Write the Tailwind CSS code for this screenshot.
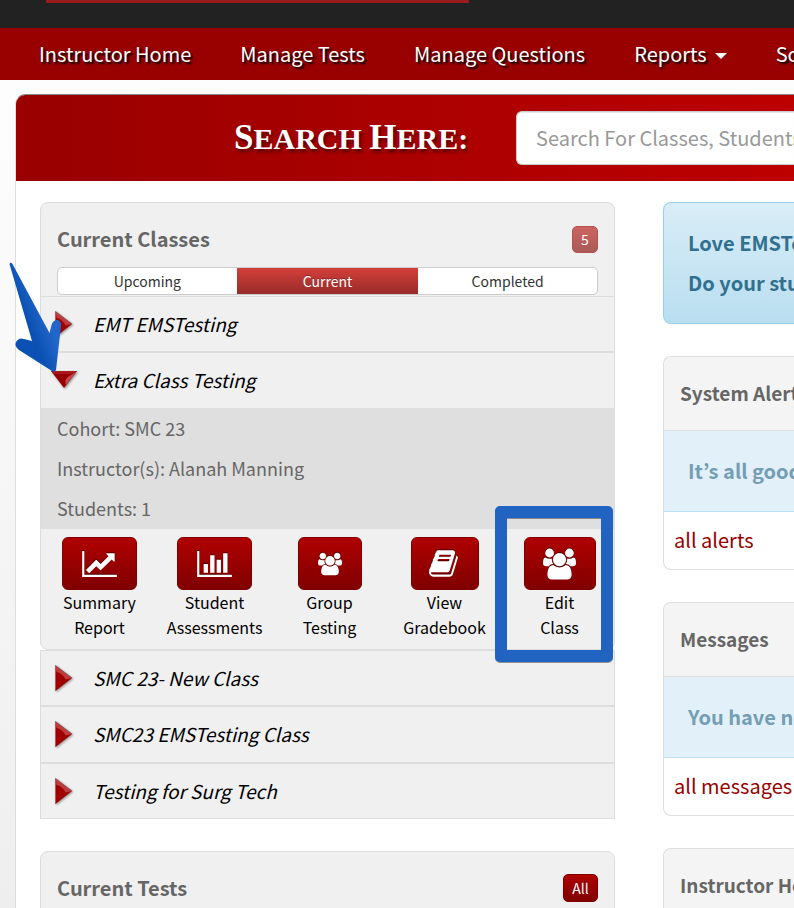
<!DOCTYPE html>
<html lang="en">
<head>
<meta charset="utf-8">
<meta name="viewport" content="width=device-width, initial-scale=1">
<title>Instructor Home</title>
<script src="https://cdn.jsdelivr.net/npm/@tailwindcss/browser@4"></script>
</head>
<body class="min-h-screen overflow-hidden bg-linear-to-b from-white to-[#eeeeee] font-['Noto_Sans_CJK_KR','Open_Sans',sans-serif] text-black">
<svg class="absolute size-0" aria-hidden="true">
  <defs>
    <symbol id="right" viewBox="0 0 20 28"><path d="M2 1.500 18.500 14 2 27z" fill="#a00000"/><path d="M2 1.500 18.500 14 12 15.500Q9 9 3 8z" fill="#bf3a3e"/><path d="M2 27V1.500L18.500 14" fill="none" stroke="#8d6060" stroke-width=".8"/></symbol>
    <symbol id="users" viewBox="0 0 1920 1792"><path d="M593 896q-162 5-265 128h-134q-82 0-138-40.500t-56-118.500q0-353 124-353 6 0 43.500 21t97.500 42.500 119 21.500q67 0 133-23-5 37-5 66 0 139 81 256zm1071 637q0 120-73 189.500t-194 69.500h-874q-121 0-194-69.500t-73-189.500q0-53 3.500-103.500t14-109 26.500-108.500 43-97.500 62-81 85.500-53.500 111.500-20q10 0 43 21.500t73 48 107 48 135 21.500 135-21.500 107-48 73-48 43-21.500q61 0 111.500 20t85.500 53.500 62 81 43 97.500 26.500 108.500 14 109 3.500 103.500zm-1024-1277q0 106-75 181t-181 75-181-75-75-181 75-181 181-75 181 75 75 181zm704 384q0 159-112.500 271.500t-271.500 112.500-271.500-112.500-112.500-271.500 112.500-271.500 271.500-112.500 271.500 112.500 112.500 271.500zm576 225q0 78-56 118.500t-138 40.500h-134q-103-123-265-128 81-117 81-256 0-29-5-66 66 23 133 23 59 0 119-21.500t97.500-42.500 43.500-21q124 0 124 353zm-128-609q0 106-75 181t-181 75-181-75-75-181 75-181 181-75 181 75 75 181z"/></symbol>
  </defs>
</svg>

<div class="h-7 bg-[#222222] pl-[46px]"><div class="h-[3px] w-[423px] bg-[#981b1e]"></div></div>

<nav class="flex h-[52px] items-center gap-[49px] overflow-hidden bg-[#990000] pl-[39px] text-xl leading-8 whitespace-nowrap text-white text-shadow-[2px_2px_2px_#000000]">
  <a href="#">Instructor Home</a>
  <a href="#">Manage Tests</a>
  <a href="#">Manage Questions</a>
  <a href="#" class="flex items-center gap-2">Reports <span class="mt-1 border-x-6 border-t-6 border-x-transparent border-t-white"></span></a>
  <a href="#">Schedule</a>
</nav>

<main class="mt-[14px] ml-[15px] overflow-hidden rounded-tl-[10px] border-t border-l border-t-[#888888] border-l-[#dddddd] bg-white">
  <header class="flex h-[86px] items-center bg-linear-to-r from-[#990000] to-[#bd0000] pl-[218px]">
    <label for="search" class="w-[282px] shrink-0 font-['Liberation_Serif',serif] text-[30px] leading-10 font-bold text-white uppercase text-shadow-[2px_3px_3px_rgb(0_0_0/0.5)]"><span class="text-[35px]">S</span>earch <span class="text-[35px]">H</span>ere:</label>
    <input id="search" type="text" placeholder="Search For Classes, Students" class="h-[54px] min-w-0 flex-1 rounded-l-md border border-r-0 border-[#cccccc] bg-white pb-0.5 pl-[19px] text-xl text-[#555555] shadow-[inset_0_1px_1px_rgb(0_0_0/0.1)] placeholder:text-[#999999]">
  </header>

  <div class="flex items-start gap-12 pt-[21px] pl-6">
    <div class="w-[575px] shrink-0">
      <section class="rounded-t-lg border border-b-0 border-[#dddddd] bg-[#f0f0f0] px-4 pt-5 pb-px">
        <div class="flex h-8 items-center justify-between">
          <h2 class="text-xl leading-8 font-bold text-[#666666]">Current Classes</h2>
          <span class="flex h-[27px] w-[26px] items-center justify-center rounded-[5px] border border-[#b5504f] bg-linear-to-b from-[#cc6460] to-[#a95b59] text-sm text-white">5</span>
        </div>
        <div class="mt-3 grid grid-cols-[179fr_182fr_179fr] overflow-hidden rounded-[5px] border border-[#cccccc] bg-white text-sm leading-[26px] text-[#333333]">
          <button type="button">Upcoming</button>
          <button type="button" class="bg-linear-to-b from-[#d43f3a] to-[#972b29] text-white text-shadow-[0_-1px_0_rgb(0_0_0/0.3)]">Current</button>
          <button type="button">Completed</button>
        </div>
      </section>

      <div class="text-[19px] leading-8">
        <button type="button" class="flex h-14 w-full items-center gap-[19px] border border-[#dddddd] bg-[#f0f0f0] pb-px pl-3 text-left italic"><svg class="h-7 w-[21px] drop-shadow-[1px_1px_1px_rgb(0_0_0/0.4)]"><use href="#right"/></svg>EMT EMSTesting</button>
        <section class="rounded-b-lg border border-[#dddddd] bg-[#f0f0f0]">
          <button type="button" class="flex h-[55px] w-full items-center gap-[14px] pb-0.5 pl-2 text-left italic"><svg class="h-[22px] w-[30px] drop-shadow-[1px_1px_1px_rgb(0_0_0/0.4)]" viewBox="0 0 30 22"><path d="M2 2h26L15 19z" fill="#980000"/><path d="M28 2 17 16q-2-5 2-8z" fill="#c4474b"/><path d="M2 2h26l-6 3H5z" fill="#a8181c"/></svg>Extra Class Testing</button>
          <div class="relative">
            <div class="h-[121px] bg-[#dfdfdf] px-4 text-lg leading-10 text-[#666666]">
              <p>Cohort: SMC 23</p><p>Instructor(s): Alanah Manning</p><p>Students: 1</p>
            </div>
            <div class="-mr-[3px] grid h-[120px] grid-cols-5 pt-2 pl-px text-center text-base leading-[25px]">
              <a href="#" class="flex flex-col items-center"><span class="flex h-[53px] w-[75px] items-center justify-center rounded-md border border-[#800000] bg-linear-to-b from-[#b00000] to-[#800000]"><svg class="h-[26px] w-[35px] fill-white drop-shadow-[0_-1px_0_#500000]" viewBox="0 0 2048 1536"><path d="M2048 1408v128H0V0h128v1408h1920zm-128-1248v435q0 21-19.500 29.500T1865 617l-121-121-633 633q-10 10-23 10t-23-10L832 896l-416 416-192-192 585-585q10-10 23-10t23 10l233 233 464-464-121-121q-16-16-7.500-35.500T1453 128h435q14 0 23 9t9 23z"/></svg></span>Summary<br>Report</a>
              <a href="#" class="flex flex-col items-center"><span class="flex h-[53px] w-[75px] items-center justify-center rounded-md border border-[#800000] bg-linear-to-b from-[#b00000] to-[#800000]"><svg class="h-[26px] w-[35px] fill-white drop-shadow-[0_-1px_0_#500000]" viewBox="0 0 2048 1536"><path d="M640 768v512H384V768h256zm384-512v1024H768V256h256zm1024 1152v128H0V0h128v1408h1920zm-640-896v768h-256V512h256zm384-384v1152h-256V128h256z"/></svg></span>Student<br>Assessments</a>
              <a href="#" class="flex flex-col items-center"><span class="flex h-[53px] w-16 items-center justify-center rounded-md border border-[#800000] bg-linear-to-b from-[#b00000] to-[#800000]"><svg class="h-6 w-6 fill-white drop-shadow-[0_-1px_0_#500000]"><use href="#users"/></svg></span>Group<br>Testing</a>
              <a href="#" class="flex flex-col items-center"><span class="flex h-[53px] w-[68px] items-center justify-center rounded-md border border-[#800000] bg-linear-to-b from-[#b00000] to-[#800000]"><svg class="size-[31px] fill-white drop-shadow-[0_-1px_0_#500000]" viewBox="0 0 1792 1792"><path d="M1639 478q40 57 18 129l-275 906q-19 64-76.500 107.500t-122.500 43.500h-923q-77 0-148.500-53.500t-99.500-131.500q-24-67-2-127 0-4 3-27t4-37q1-8-3-21.500t-3-19.500q2-11 8-21t16.500-23.500 16.500-23.500q23-38 45-91.500t30-91.500q3-10 .5-30t-.5-28q3-11 17-28t17-23q21-36 42-92t25-90q1-9-2.500-32t.5-28q4-13 22-30.500t22-22.500q19-26 42.500-84.500t27.500-96.500q1-8-3-25.500t-2-26.500q2-8 9-18t18-23 17-21q8-12 16.500-30.500t15-35 16-36 19.500-32 26.500-23.500 36-11.500 47.500 5.500l-1 3q38-9 51-9h761q74 0 114 56t18 130l-274 906q-36 119-71.500 153.500t-128.500 34.500h-869q-27 0-38 15-11 16-1 43 24 70 144 70h923q29 0 56-15.500t35-41.500l300-987q7-22 5-57 38 15 59 43zm-1064 2q-4 13 2 22.500t20 9.500h608q13 0 25.500-9.500t16.500-22.500l21-64q4-13-2-22.500t-20-9.500h-608q-13 0-25.500 9.500t-16.500 22.500zm-83 256q-4 13 2 22.500t20 9.500h608q13 0 25.500-9.500t16.500-22.500l21-64q4-13-2-22.500t-20-9.500h-608q-13 0-25.500 9.500t-16.500 22.500z"/></svg></span>View<br>Gradebook</a>
              <a href="#" class="flex flex-col items-center"><span class="flex h-[53px] w-[72px] items-center justify-center rounded-md border border-[#800000] bg-linear-to-b from-[#b00000] to-[#800000]"><svg class="h-8 w-[33px] fill-white drop-shadow-[0_-1px_0_#500000]"><use href="#users"/></svg></span>Edit<br>Class</a>
            </div>
            <div class="pointer-events-none absolute top-[98px] right-px h-[156px] w-[118px] rounded-[5px] border-12 border-[#2063c0] drop-shadow-[0_1px_0_rgb(0_0_0/0.4)]"></div>
          </div>
        </section>
        <button type="button" class="flex h-14 w-full items-center gap-[19px] border border-[#dddddd] bg-[#f0f0f0] pb-px pl-3 text-left italic"><svg class="h-7 w-[21px] drop-shadow-[1px_1px_1px_rgb(0_0_0/0.4)]"><use href="#right"/></svg>SMC 23- New Class</button>
        <button type="button" class="flex h-[57px] w-full items-center gap-[19px] border border-[#dddddd] bg-[#f0f0f0] pb-px pl-3 text-left italic"><svg class="h-7 w-[21px] drop-shadow-[1px_1px_1px_rgb(0_0_0/0.4)]"><use href="#right"/></svg>SMC23 EMSTesting Class</button>
        <button type="button" class="flex h-14 w-full items-center gap-[19px] border border-[#dddddd] bg-[#f0f0f0] pb-px pl-3 text-left italic"><svg class="h-7 w-[21px] drop-shadow-[1px_1px_1px_rgb(0_0_0/0.4)]"><use href="#right"/></svg>Testing for Surg Tech</button>
      </div>

      <section class="mt-8 rounded-t-lg border border-[#dddddd] bg-[#f0f0f0] px-4 py-5">
        <div class="flex h-8 items-center justify-between">
          <h2 class="text-xl leading-8 font-bold text-[#666666]">Current Tests</h2>
          <button type="button" class="flex h-7 w-[35px] items-center justify-center rounded-[5px] border border-[#800000] bg-linear-to-b from-[#b00000] to-[#800000] text-sm text-white">All</button>
        </div>
      </section>
    </div>

    <aside class="flex min-w-0 flex-1 flex-col gap-8 overflow-hidden text-xl whitespace-nowrap">
      <section class="rounded-l-lg border border-r-0 border-[#9acfea] bg-linear-to-b from-[#d9edf7] to-[#b9def0] py-5 pl-6 leading-10 font-bold text-[#31708f]"><p>Love EMSTesting?</p><p>Do your students</p></section>
      <section class="rounded-l-lg border border-r-0 border-[#dddddd] bg-white">
        <h2 class="rounded-tl-lg bg-[#f4f4f4] pb-0.5 pl-4 text-[19px] leading-[71px] font-bold text-[#666666]">System Alerts</h2>
        <p class="border-y border-t-[#dddddd] border-b-[#bcdff1] bg-[#e2f0f9] pl-6 leading-[80px] font-bold text-[#759db3]">It’s all good</p>
        <a href="#" class="block pb-0.5 pl-[10px] leading-[55px] text-[#990000]">all alerts</a>
      </section>
      <section class="rounded-l-lg border border-r-0 border-[#dddddd] bg-white">
        <h2 class="rounded-tl-lg bg-[#f4f4f4] pb-0.5 pl-4 text-[19px] leading-[71px] font-bold text-[#666666]">Messages</h2>
        <p class="border-y border-t-[#dddddd] border-b-[#bcdff1] bg-[#e2f0f9] pl-6 leading-[80px] font-bold text-[#759db3]">You have no</p>
        <a href="#" class="block pb-0.5 pl-[10px] leading-[55px] text-[#990000]">all messages</a>
      </section>
      <section class="rounded-l-lg border border-r-0 border-[#dddddd] bg-white">
        <h2 class="rounded-tl-lg bg-[#f4f4f4] pb-0.5 pl-4 text-[19px] leading-[71px] font-bold text-[#666666]">Instructor Home</h2>
      </section>
    </aside>
  </div>
</main>

<!-- Pointer arrow over the expanded class -->
<svg class="pointer-events-none absolute top-[260px] left-[8px] h-[116px] w-[56px]" viewBox="0 0 56 116" aria-hidden="true">
  <defs><linearGradient id="blue" gradientUnits="userSpaceOnUse" x1="25" y1="75" x2="43" y2="68"><stop offset="0" stop-color="#0b51b4"/><stop offset="1" stop-color="#2166c8"/></linearGradient></defs>
  <path d="M1.500 4q1-2.500 3 0L41.500 73l2-8q1.500-5 6-5Q53.500 61 53 66L48 110q-1 3-4 1L11 90q-5-4-3-8 3-5 8-3l8 2z" fill="url(#blue)"/>
</svg>
</body>
</html>
